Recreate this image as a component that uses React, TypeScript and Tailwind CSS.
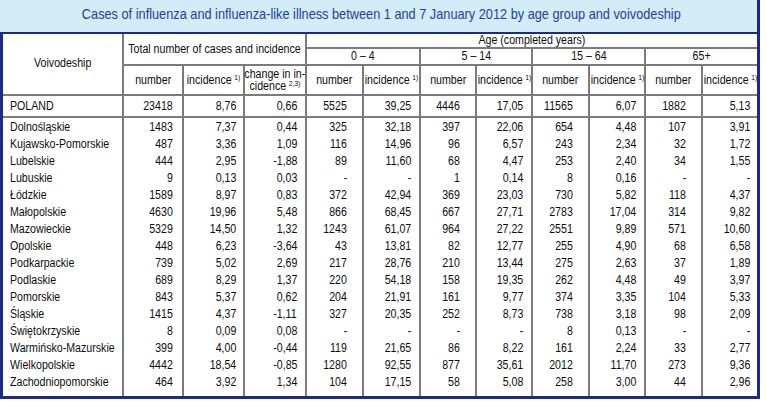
import React from "react";

const rows: string[][] = [
  ["Dolnośląskie", "1483", "7,37", "0,44", "325", "32,18", "397", "22,06", "654", "4,48", "107", "3,91"],
  ["Kujawsko-Pomorskie", "487", "3,36", "1,09", "116", "14,96", "96", "6,57", "243", "2,34", "32", "1,72"],
  ["Lubelskie", "444", "2,95", "-1,88", "89", "11,60", "68", "4,47", "253", "2,40", "34", "1,55"],
  ["Lubuskie", "9", "0,13", "0,03", "-", "-", "1", "0,14", "8", "0,16", "-", "-"],
  ["Łódzkie", "1589", "8,97", "0,83", "372", "42,94", "369", "23,03", "730", "5,82", "118", "4,37"],
  ["Małopolskie", "4630", "19,96", "5,48", "866", "68,45", "667", "27,71", "2783", "17,04", "314", "9,82"],
  ["Mazowieckie", "5329", "14,50", "1,32", "1243", "61,07", "964", "27,22", "2551", "9,89", "571", "10,60"],
  ["Opolskie", "448", "6,23", "-3,64", "43", "13,81", "82", "12,77", "255", "4,90", "68", "6,58"],
  ["Podkarpackie", "739", "5,02", "2,69", "217", "28,76", "210", "13,44", "275", "2,63", "37", "1,89"],
  ["Podlaskie", "689", "8,29", "1,37", "220", "54,18", "158", "19,35", "262", "4,48", "49", "3,97"],
  ["Pomorskie", "843", "5,37", "0,62", "204", "21,91", "161", "9,77", "374", "3,35", "104", "5,33"],
  ["Śląskie", "1415", "4,37", "-1,11", "327", "20,35", "252", "8,73", "738", "3,18", "98", "2,09"],
  ["Świętokrzyskie", "8", "0,09", "0,08", "-", "-", "-", "-", "8", "0,13", "-", "-"],
  ["Warmińsko-Mazurskie", "399", "4,00", "-0,44", "119", "21,65", "86", "8,22", "161", "2,24", "33", "2,77"],
  ["Wielkopolskie", "4442", "18,54", "-0,85", "1280", "92,55", "877", "35,61", "2012", "11,70", "273", "9,36"],
  ["Zachodniopomorskie", "464", "3,92", "1,34", "104", "17,15", "58", "5,08", "258", "3,00", "44", "2,96"],
];

const poland = ["POLAND", "23418", "8,76", "0,66", "5525", "39,25", "4446", "17,05", "11565", "6,07", "1882", "5,13"];

const pad = [
  "pl-[7px] justify-start",
  "pr-[9px] justify-end border-r-2",
  "pr-[7px] justify-end border-r-2",
  "pr-[8px] justify-end border-r-2",
  "pr-[15px] justify-end border-r-2",
  "pr-[8px] justify-end border-r-2",
  "pr-[15px] justify-end border-r-2",
  "pr-[8px] justify-end border-r-2",
  "pr-[15px] justify-end border-r-2",
  "pr-[8px] justify-end border-r-2",
  "pr-[15px] justify-end border-r-2",
  "pr-[7px] justify-end",
];

const grid =
  "grid grid-cols-[121px_60px_61px_62px_57px_57px_56px_56px_57px_56px_57px_54px]";

/* narrow text: the reference uses a condensed face */
function N({ children, o }: { children: React.ReactNode; o: string }) {
  return <span className={`inline-block whitespace-nowrap scale-x-[0.85] ${o}`}>{children}</span>;
}

function Sup({ t }: { t: string }) {
  return <span className="relative -top-[4px] ml-[3px] text-[8px] leading-none">{t}</span>;
}

function Row({ cells, cls }: { cells: string[]; cls: string }) {
  return (
    <div className={`${grid} ${cls}`}>
      {cells.map((c, i) => (
        <div
          key={i}
          className={`flex items-center border-[#7b7b7b] ${i === 0 ? "border-r-2" : ""} ${pad[i]}`}
        >
          <N o={i === 0 ? "origin-left" : "origin-right"}>{c}</N>
        </div>
      ))}
    </div>
  );
}

export default function App() {
  const line = "border-[#7b7b7b]";
  const ranges = ["0 – 4", "5 – 14", "15 – 64", "65+"];
  return (
    <div className="w-[767px] h-[403px] bg-white overflow-hidden font-['Liberation_Sans',Arial,sans-serif] text-[12.5px] text-[#0d0d0d]">
      <div className="w-[760px] border-r-[3px] border-b-[3px] border-[#1b2a8c]">
        <div className="h-[34px] border-b-2 border-[#1b2a8c] bg-[#d3edf8] flex items-center justify-center pb-[3px] pl-[6px] text-[15px] text-[#233f98]">
          <N o="origin-center">
            Cases of influenza and influenza-like illness between 1 and 7 January 2012 by age group and voivodeship
          </N>
        </div>
        <div className="border-l-[3px] border-[#1b2a8c]">
          <div className={`${grid} grid-rows-[15px_17px_30px] leading-none`}>
            <div className={`row-span-3 col-start-1 row-start-1 border-r-2 border-b-2 ${line} flex items-center justify-center pb-[2px]`}>
              <N o="origin-center">Voivodeship</N>
            </div>
            <div className={`col-start-2 col-span-3 row-start-1 row-span-2 border-r-2 border-b-2 ${line} flex items-center justify-center`}>
              <N o="origin-center">Total number of cases and incidence</N>
            </div>
            <div className={`col-start-5 col-span-8 row-start-1 border-b-2 ${line} flex items-center justify-center`}>
              <N o="origin-center">Age (completed years)</N>
            </div>
            {ranges.map((r, i) => (
              <div
                key={r}
                className={`row-start-2 col-span-2 border-b-2 ${i < 3 ? "border-r-2" : ""} ${line} flex items-center justify-center`}
              >
                <N o="origin-center">{r}</N>
              </div>
            ))}
            <div className={`row-start-3 col-start-2 border-r-2 border-b-2 ${line} flex items-center justify-center`}>
              <N o="origin-center">number</N>
            </div>
            <div className={`row-start-3 col-start-3 border-r-2 border-b-2 ${line} flex items-center justify-center`}>
              <N o="origin-center">
                incidence<Sup t="1)" />
              </N>
            </div>
            <div className={`row-start-3 col-start-4 border-r-2 border-b-2 ${line} flex flex-col items-center justify-center leading-[12px]`}>
              <N o="origin-center">change in in-</N>
              <N o="origin-center">
                cidence<Sup t="2,3)" />
              </N>
            </div>
            {[0, 1, 2, 3, 4, 5, 6, 7].map((k) => (
              <div
                key={k}
                className={`row-start-3 border-b-2 ${k < 7 ? "border-r-2" : ""} ${line} flex items-center justify-center`}
              >
                <N o="origin-center">
                  {k % 2 === 0 ? (
                    "number"
                  ) : (
                    <>
                      incidence<Sup t="1)" />
                    </>
                  )}
                </N>
              </div>
            ))}
          </div>
          <Row cells={poland} cls={`h-[22px] border-b-2 ${line}`} />
          {rows.map((r) => (
            <Row key={r[0]} cells={r} cls="h-[17px]" />
          ))}
          <Row cells={["", "", "", "", "", "", "", "", "", "", "", ""]} cls="h-[6px]" />
        </div>
      </div>
    </div>
  );
}
